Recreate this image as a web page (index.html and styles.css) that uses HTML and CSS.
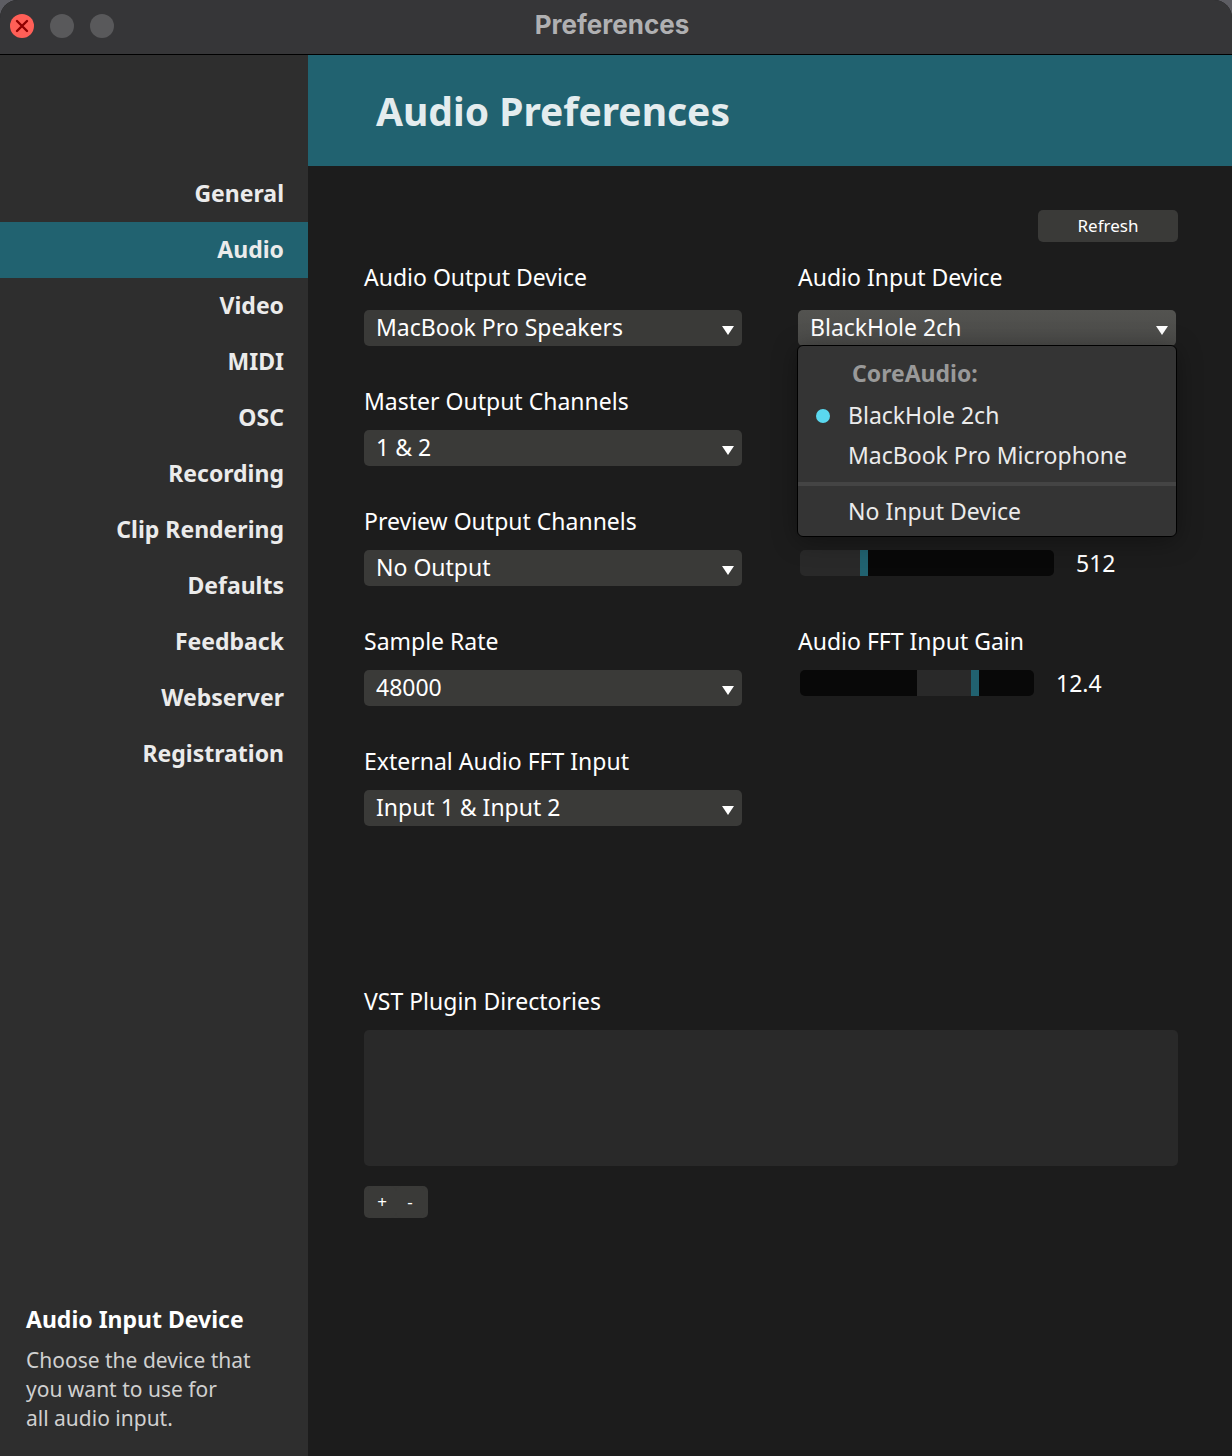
FILE: index.html
```html
<!DOCTYPE html>
<html lang="en">
  <head>
    <meta charset="UTF-8" />
    <meta name="viewport" content="width=device-width, initial-scale=1.0" />
    <title>Preferences</title>
    <link rel="stylesheet" href="styles.css" />
  </head>
  <body>
    <div class="window">
      <div class="titlebar">
        <div class="controls">
          <button class="control close" aria-label="Close">
            <svg viewBox="0 0 24 24" width="24" height="24">
              <path d="M7 7l10 10M17 7L7 17" />
            </svg>
          </button>
          <button class="control" aria-label="Minimize"></button>
          <button class="control" aria-label="Zoom"></button>
        </div>
        <div class="title">Preferences</div>
      </div>

      <div class="main">
        <aside class="sidebar">
          <nav>
            <a href="#general">General</a>
            <a href="#audio" class="active">Audio</a>
            <a href="#video">Video</a>
            <a href="#midi">MIDI</a>
            <a href="#osc">OSC</a>
            <a href="#recording">Recording</a>
            <a href="#clip-rendering">Clip Rendering</a>
            <a href="#defaults">Defaults</a>
            <a href="#feedback">Feedback</a>
            <a href="#webserver">Webserver</a>
            <a href="#registration">Registration</a>
          </nav>
          <div class="help">
            <h2>Audio Input Device</h2>
            <p>Choose the device that<br />you want to use for<br />all audio input.</p>
          </div>
        </aside>

        <main class="content">
          <h1>Audio Preferences</h1>

          <div class="panel">
            <button class="btn refresh">Refresh</button>

            <div class="columns">
              <div class="column">
                <div class="field device">
                  <label for="output-device">Audio Output Device</label>
                  <div class="dropdown">
                    <select id="output-device">
                      <option>MacBook Pro Speakers</option>
                    </select>
                  </div>
                </div>
                <div class="field">
                  <label for="master-channels">Master Output Channels</label>
                  <div class="dropdown">
                    <select id="master-channels">
                      <option>1 &amp; 2</option>
                    </select>
                  </div>
                </div>
                <div class="field">
                  <label for="preview-channels">Preview Output Channels</label>
                  <div class="dropdown">
                    <select id="preview-channels">
                      <option>No Output</option>
                    </select>
                  </div>
                </div>
                <div class="field">
                  <label for="sample-rate">Sample Rate</label>
                  <div class="dropdown">
                    <select id="sample-rate">
                      <option>48000</option>
                    </select>
                  </div>
                </div>
                <div class="field">
                  <label for="fft-input">External Audio FFT Input</label>
                  <div class="dropdown">
                    <select id="fft-input">
                      <option>Input 1 &amp; Input 2</option>
                    </select>
                  </div>
                </div>
              </div>

              <div class="column">
                <div class="field device">
                  <label for="input-device">Audio Input Device</label>
                  <div class="dropdown open">
                    <select id="input-device">
                      <option>BlackHole 2ch</option>
                    </select>
                    <div class="menu">
                      <div class="menu-heading">CoreAudio:</div>
                      <button class="menu-item selected">BlackHole 2ch</button>
                      <button class="menu-item">MacBook Pro Microphone</button>
                      <hr />
                      <button class="menu-item">No Input Device</button>
                    </div>
                  </div>
                </div>
                <div class="slider-row buffer">
                  <input type="range" id="buffer-size" aria-label="Buffer size" min="16" max="2048" step="16" value="512" />
                  <output for="buffer-size">512</output>
                </div>
                <div class="field">
                  <label for="input-gain">Audio FFT Input Gain</label>
                  <div class="slider-row gain">
                    <input type="range" id="input-gain" min="-24" max="24" step="0.1" value="12.4" />
                    <output for="input-gain">12.4</output>
                  </div>
                </div>
              </div>
            </div>

            <div class="field plugins">
              <label for="vst-directories">VST Plugin Directories</label>
              <select id="vst-directories" class="directory-list" multiple></select>
              <div class="btn-group">
                <button class="btn" aria-label="Add directory">+</button>
                <button class="btn" aria-label="Remove directory">-</button>
              </div>
            </div>
          </div>
        </main>
      </div>
    </div>
  </body>
</html>
```
FILE: styles.css
```css
* {
  box-sizing: border-box;
}
body {
  margin: 0;
  background-color: #5d5d63;
  color: #fff;
  font-family: "Noto Sans", sans-serif;
  font-size: 23px;
  line-height: 30px;
}
button,
select {
  border: none;
  color: inherit;
  font: inherit;
}
h1,
h2,
p {
  margin: 0;
}
.window {
  display: flex;
  flex-direction: column;
  min-height: 100vh;
  border-radius: 18px 18px 0 0;
  overflow: hidden;
  background-color: #1c1c1c;
}

/* title bar */
.titlebar {
  display: grid;
  grid-template-columns: 1fr auto 1fr;
  align-items: center;
  height: 55px;
  padding: 0 18px 2px 10px;
  border-bottom: 1px solid #000;
  background-color: #363638;
}
.controls {
  display: flex;
  gap: 16px;
}
.control {
  width: 24px;
  height: 24px;
  padding: 0;
  border-radius: 50%;
  background-color: #59595b;
}
.control.close {
  background-color: #ff5f57;
}
.control svg {
  display: block;
  fill: none;
  stroke: #8e0000;
  stroke-width: 2.4;
  stroke-linecap: round;
}
.title {
  padding-bottom: 2px;
  color: #b0b0b2;
  font-family: Inter, sans-serif;
  font-size: 26px;
  font-weight: 700;
}

.main {
  display: flex;
  flex: 1;
}

/* sidebar */
.sidebar {
  display: flex;
  flex-direction: column;
  justify-content: space-between;
  flex: 0 0 308px;
  padding: 111px 0 23px;
  background-color: #2e2e2e;
}
nav a {
  display: block;
  padding: 12px 24px 14px;
  color: #ebebeb;
  font-weight: 700;
  text-align: right;
  text-decoration: none;
}
nav a.active {
  background-color: #216270;
}
.help {
  padding: 0 26px;
  color: #d0d0d0;
  font-size: 21px;
  line-height: 29px;
}
.help h2 {
  margin-bottom: 12px;
  color: #fff;
  font-size: 23px;
  line-height: 30px;
}

/* content */
.content {
  flex: 1;
  min-width: 0;
}
h1 {
  padding: 28px 68px 27px;
  background-color: #216270;
  color: #e4ecee;
  font-size: 39px;
  line-height: 56px;
}
.panel {
  padding: 44px 54px 0 56px;
}
.btn {
  border-radius: 5px;
  background-color: #3a3a38;
  font-size: 17px;
  line-height: 32px;
  padding: 0;
}
.refresh {
  display: block;
  width: 140px;
  margin: 0 0 20px auto;
}
.columns {
  display: grid;
  grid-template-columns: 1fr 1fr;
  column-gap: 56px;
  padding-right: 2px;
}
.column {
  display: flex;
  flex-direction: column;
  gap: 40px;
}
.field {
  display: flex;
  flex-direction: column;
  gap: 12px;
}
.field label {
  padding-bottom: 2px;
}
.field.device {
  gap: 16px;
}
.dropdown {
  position: relative;
}
.dropdown select {
  display: block;
  appearance: none;
  width: 100%;
  height: 36px;
  padding: 0 32px 2px 12px;
  border-radius: 5px;
  background-color: #3a3a38;
}
.dropdown::after {
  content: "";
  position: absolute;
  top: 16px;
  right: 8px;
  width: 12px;
  height: 9px;
  background-color: #fff;
  clip-path: polygon(0 0, 100% 0, 50% 100%);
  pointer-events: none;
}
.dropdown.open select {
  background: linear-gradient(#535350, #4a4a48);
}
.menu {
  position: absolute;
  top: 35px;
  left: -1px;
  right: -1px;
  z-index: 1;
  padding: 8px 0 4px;
  border: 1px solid #000;
  border-radius: 6px;
  background-color: #343434;
  box-shadow: 0 4px 24px rgba(0, 0, 0, 0.35);
}
.menu-heading {
  margin-bottom: 2px;
  padding: 4px 54px 6px;
  color: #999;
  font-weight: 700;
}
.menu-item {
  display: block;
  position: relative;
  width: 100%;
  padding: 4px 12px 6px 50px;
  background: none;
  color: #ebebeb;
  text-align: left;
  white-space: nowrap;
}
.menu-item.selected::before {
  content: "";
  position: absolute;
  top: 13px;
  left: 18px;
  width: 14px;
  height: 14px;
  border-radius: 50%;
  background-color: #5ad8ef;
}
.menu hr {
  height: 4px;
  margin: 6px 0;
  border: none;
  background-color: #444;
}

/* sliders */
.slider-row {
  display: flex;
  align-items: center;
  gap: 22px;
  height: 26px;
  padding-left: 2px;
}
.slider-row.buffer {
  margin-top: 164px;
  margin-bottom: 10px;
}
.slider-row input {
  appearance: none;
  height: 26px;
  margin: 0;
  border-radius: 5px;
  background-color: #080808;
}
.slider-row input::-webkit-slider-thumb {
  appearance: none;
  width: 8px;
  height: 26px;
  background-color: #216270;
}
.buffer input {
  width: 254px;
  background-image: linear-gradient(to right, #292929 25%, transparent 25%);
}
.gain input {
  width: 234px;
  background-image: linear-gradient(to right, transparent 50%, #292929 50%, #292929 75%, transparent 75%);
}

/* plugin directories */
.plugins {
  margin-top: 160px;
}
.directory-list {
  appearance: none;
  width: 100%;
  height: 136px;
  border-radius: 5px;
  background-color: #292929;
}
.btn-group {
  display: flex;
  width: 64px;
  margin-top: 8px;
  padding: 0 4px;
  border-radius: 5px;
  background-color: #3a3a38;
}
.btn-group .btn {
  flex: 1;
}
```
